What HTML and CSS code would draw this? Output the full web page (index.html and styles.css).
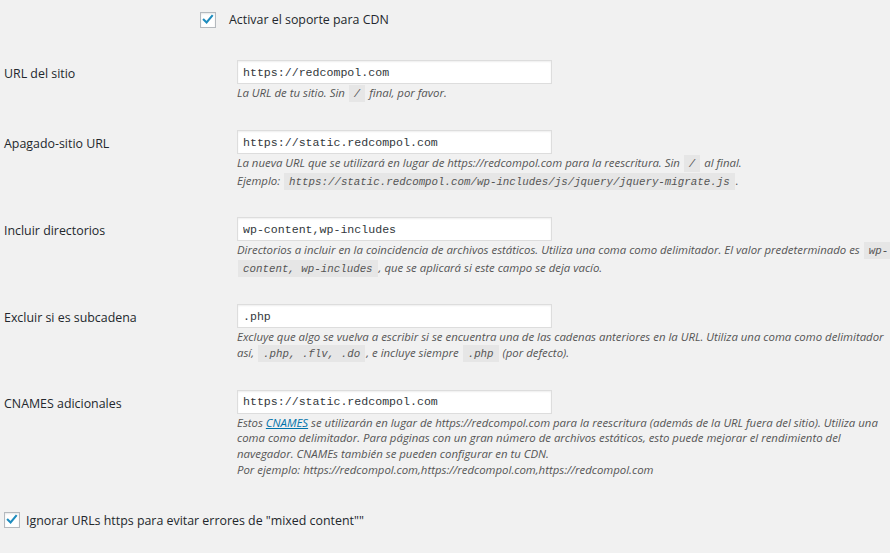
FILE: index.html
```html
<!DOCTYPE html>
<html lang="es">
<head>
<meta charset="utf-8">
<title>CDN</title>
<link rel="stylesheet" href="styles.css">
</head>
<body>
<div class="page">
  <div class="check check-top">
    <span class="box"><svg viewBox="0 0 16 16" width="16" height="16"><path d="M3.2 7.6 L6.4 10.9 L12.6 3.4" fill="none" stroke="#1e8cbe" stroke-width="2.4" stroke-linecap="square"/></svg></span>
    <span class="check-label">Activar el soporte para CDN</span>
  </div>

  <div class="row">
    <div class="label">URL del sitio</div>
    <div class="field">
      <input class="text" type="text" value="https://redcompol.com">
      <p class="desc">La URL de tu sitio. Sin <code>/</code> final, por favor.</p>
    </div>
  </div>

  <div class="row row-wide">
    <div class="label">Apagado-sitio URL</div>
    <div class="field">
      <input class="text" type="text" value="https://static.redcompol.com">
      <p class="desc">La nueva URL que se utilizará en lugar de https://redcompol.com para la reescritura. Sin <code>/</code> al final.<br>Ejemplo: <code>https://static.redcompol.com/wp-includes/js/jquery/jquery-migrate.js</code>.</p>
    </div>
  </div>

  <div class="row">
    <div class="label">Incluir directorios</div>
    <div class="field">
      <input class="text" type="text" value="wp-content,wp-includes">
      <p class="desc">Directorios a incluir en la coincidencia de archivos estáticos. Utiliza una coma como delimitador. El valor predeterminado es <code class="tail">wp-</code><br><code class="head">content, wp-includes</code>, que se aplicará si este campo se deja vacío.</p>
    </div>
  </div>

  <div class="row">
    <div class="label">Excluir si es subcadena</div>
    <div class="field">
      <input class="text" type="text" value=".php">
      <p class="desc">Excluye que algo se vuelva a escribir si se encuentra una de las cadenas anteriores en la URL. Utiliza una coma como delimitador<br>así, <code>.php, .flv, .do</code>, e incluye siempre <code>.php</code> (por defecto).</p>
    </div>
  </div>

  <div class="row row-wide">
    <div class="label">CNAMES adicionales</div>
    <div class="field">
      <input class="text" type="text" value="https://static.redcompol.com">
      <p class="desc">Estos <a href="#">CNAMES</a> se utilizarán en lugar de https://redcompol.com para la reescritura (además de la URL fuera del sitio). Utiliza una<br>coma como delimitador. Para páginas con un gran número de archivos estáticos, esto puede mejorar el rendimiento del<br>navegador. CNAMEs también se pueden configurar en tu CDN.<br>Por ejemplo: https://redcompol.com,https://redcompol.com,https://redcompol.com</p>
    </div>
  </div>

  <div class="check check-bottom">
    <span class="box"><svg viewBox="0 0 16 16" width="16" height="16"><path d="M3.2 7.6 L6.4 10.9 L12.6 3.4" fill="none" stroke="#1e8cbe" stroke-width="2.4" stroke-linecap="square"/></svg></span>
    <span class="check-label">Ignorar URLs https para evitar errores de "mixed content""</span>
  </div>
</div>
</body>
</html>
```

FILE: styles.css
```css
html, body {
  margin: 0;
  padding: 0;
  background: #f1f1f1;
}
body {
  font-family: "Segoe UI", "Open Sans", "Noto Sans", sans-serif;
  color: #23282d;
  font-size: 12.4px;
}
.page {
  padding: 11px 0 0 4px;
}
.check {
  display: flex;
  align-items: center;
  gap: 13px;
  font-size: 12.4px;
}
.check-top {
  margin-left: 196px;
}
.check-bottom {
  margin-top: 34px;
  gap: 6px;
}
.box {
  width: 14px;
  height: 14px;
  border: 1px solid #b4b9be;
  background: #fff;
  box-shadow: inset 0 1px 2px rgba(0,0,0,.1);
  display: flex;
  align-items: center;
  justify-content: center;
}
.box svg {
  width: 14px;
  height: 14px;
}
.row {
  display: flex;
  padding-top: 32px;
}
.row + .row {
  padding-top: 26px;
}
.row + .row-wide {
  padding-top: 27px;
}
.label {
  width: 233px;
  flex: none;
  font-size: 12.4px;
  line-height: 24px;
  padding-top: 2px;
}
.field {
  flex: 1;
  min-width: 0;
}
.text {
  display: block;
  box-sizing: border-box;
  width: 315px;
  height: 24px;
  margin: 0;
  padding: 0 5px;
  border: 1px solid #ddd;
  background: #fff;
  box-shadow: inset 0 1px 2px rgba(0,0,0,.07);
  font-family: "Liberation Mono", monospace;
  font-size: 11.6px;
  color: #32373c;
  outline: none;
}
.desc {
  margin: 1px 0 0;
  font-size: 11.4px;
  font-style: italic;
  color: #555;
  line-height: 15.7px;
  white-space: nowrap;
}
.desc code {
  font-family: "Liberation Mono", monospace;
  font-size: 10.8px;
  background: #e6e6e6;
  padding: 3px 5px 2px;
  margin: 0 1px;
  font-style: italic;
  line-height: 18px;
}
.desc code.tail {
  padding-right: 4px;
}
.desc a {
  color: #0073aa;
}
```
